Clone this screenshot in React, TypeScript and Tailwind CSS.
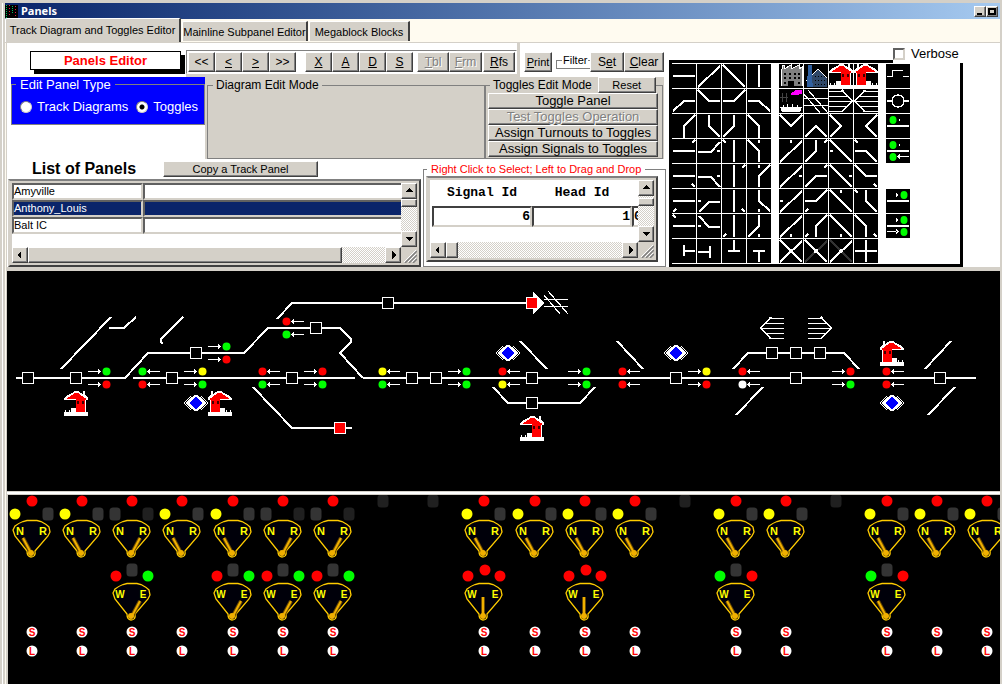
import type { ReactNode } from "react";

const RAISED =
  "bg-[#d4d0c8] border border-t-white border-l-white border-r-[#404040] border-b-[#404040] shadow-[inset_-1px_-1px_0_#808080]";
const TRACK =
  "bg-[repeating-conic-gradient(#ffffff_0_25%,#d4d0c8_0_50%)] bg-[length:2px_2px]";
const SUBFORM =
  "border-2 border-t-[#808080] border-l-[#d4d0c8] border-r-[#404040] border-b-[#404040] bg-[#d4d0c8] p-[2px]";

/* ---------- form controls ---------- */

function Btn({
  children,
  className = "",
  disabled = false,
}: {
  children: ReactNode;
  className?: string;
  disabled?: boolean;
}) {
  const tone = disabled ? "text-[#808080] [text-shadow:1px_1px_0_#fff]" : "text-black";
  return (
    <button
      type="button"
      disabled={disabled}
      className={`${RAISED} ${tone} flex items-center justify-center whitespace-nowrap ${className}`}
    >
      {children}
    </button>
  );
}

const ARROWS = {
  up: "M1 5L4.5 1L8 5Z",
  down: "M1 2L4.5 6L8 2Z",
  left: "M5 0L1 4L5 8Z",
  right: "M3 0L7 4L3 8Z",
};

function ScrollBtn({ dir }: { dir: keyof typeof ARROWS }) {
  return (
    <button
      type="button"
      aria-label={dir}
      className={`${RAISED} flex h-4 w-4 shrink-0 items-center justify-center`}
    >
      <svg width="9" height="8" viewBox="0 0 9 8" shapeRendering="crispEdges">
        <path d={ARROWS[dir]} />
      </svg>
    </button>
  );
}

function Grip() {
  return (
    <div className="flex h-4 w-4 items-end justify-end">
      <svg width="13" height="13" viewBox="0 0 13 13">
        <path d="M1 13L13 1M5 13L13 5M9 13L13 9" stroke="#808080" strokeWidth="1.5" />
        <path d="M0 12L12 0M4 12L12 4M8 12L12 8" stroke="#fff" strokeWidth="1" />
      </svg>
    </div>
  );
}

/* ---------- icons shared by the palette and the diagram ---------- */

function House({ flip = false }: { flip?: boolean }) {
  return (
    <g transform={flip ? "translate(24 0) scale(-1 1)" : undefined}>
      <path d="M0 9V7L4 4L8 2L11 0H14L19 3V0H21V4L24 6V9H22V21H24V25H0V21H1V19H2V21H5V19H6V21H7V17H11V9Z" fill="#fff" />
      <path d="M2 8L11 2H14L21 7H22V9H21V21H12V8Z" fill="#f00" />
      <path d="M0 9H12V17H7V19H2V9Z" fill="#000" />
      <path d="M13 10H15V13H13ZM18 10H20V13H18Z" fill="#400000" />
    </g>
  );
}

function YardRight() {
  return (
    <g fill="none" stroke="#fff">
      <path d="M13 1L23.500 12L13 23" strokeWidth="1.500" />
      <path d="M0 2.500H13M0 7.500H18M0 12.500H23M0 17.500H18M0 22.500H13" />
    </g>
  );
}

function Bridge() {
  return (
    <path
      d="M0 9.500H24M0 16.500H24M4 1L24 24M0 5L16 24"
      fill="none"
      stroke="#fff"
      strokeWidth="1.200"
    />
  );
}

function Factory() {
  return (
    <g>
      <path d="M2 22V7L3 5V1H5V5L12 1V5L20 1V5L23 3V22Z" fill="#808080" />
      <path d="M2 22V7L3 5V1H5V5L12 1V5L20 1V5L23 3V22" fill="none" stroke="#fff" />
      <path d="M5 9H7V11H5ZM10 9H12V11H10ZM15 9H17V11H15ZM19 9H21V11H19ZM5 13H7V15H5ZM10 13H12V15H10ZM15 13H17V15H15ZM19 13H21V15H19ZM5 18H7V20H5ZM9 17H15V22H9ZM19 18H21V20H19Z" fill="#000" />
    </g>
  );
}

function Mill() {
  return (
    <g>
      <path d="M8 12L14 5L23 13V23H8Z" fill="#304868" />
      <path d="M2 17L14 5L23 14" fill="none" stroke="#fff" />
      <path d="M4 1H8V14L9 23H3Z" fill="#3060a0" />
      <path d="M11 12.500H21M11 16.500H22M11 20.500H22" stroke="#000" strokeDasharray="1 2" />
    </g>
  );
}

function Ship() {
  return (
    <g>
      <path d="M11 5L14 3L16 1H23V5H20V6H12Z" fill="#f0f" />
      <path d="M1 8.500H9M3.500 4V13M7.500 4V13" stroke="#444" strokeWidth="1.500" />
      <path d="M1 18H4V16H5V18H8V15H9V18H13V15H14V18H18V16H19V18H23L21 23H3Z" fill="#fff" />
    </g>
  );
}

/* ---------- track palette ---------- */

const H = "M1 12H23";
const V = "M12 1V23";
const SL = "M1 23L23 2";
const BS = "M1 1L23 23";
const T = "M12 1V4";
const B = "M12 20V23";
const L = "M1 12H4";
const R = "M20 12H23";
const TL = "M1 1L4 4";
const TR = "M23 1L20 4";
const BL = "M1 23L4 20";
const BR = "M23 23L20 20";

const TRACKS: string[] = [
  H, SL, BS, V,
  "M1 22L12 12H23", "M1 1L12 12H23", "M1 12H12L23 1", "M1 12H12L23 22",
  "M23 1L12 12V24", "M12 1V12L23 23", "M12 1V12L1 23", "M1 1L12 12V24",
  H + TR, "M1 13H14L23 3" + R, V + TL, "M1 1L12 12V23" + T,
  H + BR, "M1 13H14L23 23" + R, V + TR, "M23 1L12 12V23" + T,
  H + BL, "M2 23L12 13H23" + L, V + BR, "M12 1V12L23 22" + B,
  H + TL, "M2 2L12 13H23" + L, V + BL, "M12 1V12L1 23" + B,
  "M12 6V17M12 12H23", "M1 13H13M13 7V19", "M12 1V12M6 12H18", "M6 12H18M12 12V23",
];

const JUNCTIONS: string[] = [
  "M1 1L12 12L23 1", "M1 23L12 12L23 23", "M1 1L12 12L1 23", "M23 1L12 12L23 23",
  SL + T, "M12 1V12L1 23" + TR, BS + L, "M1 12H12L23 23" + TL,
  SL + R, "M1 23L12 12H23" + TR, BS + R, "M1 1L12 12H23" + BR,
  SL + L, "M1 12H12L23 1" + BL, BS + T, "M12 1V12L23 23" + TL,
  SL + B, "M23 1L12 12V23" + BL, BS + B, "M1 1L12 12V23" + BR,
];

function Tile({ d, children }: { d?: string; children?: ReactNode }) {
  return (
    <svg width="24" height="24" viewBox="0 0 24 24" className="bg-black" shapeRendering="crispEdges">
      {d && <path d={d} fill="none" stroke="#fff" strokeWidth="2" />}
      {children}
    </svg>
  );
}

function Dot({ x, y, c }: { x: number; y: number; c: string }) {
  return <ellipse cx={x} cy={y} rx="3.500" ry="4" fill={c} shapeRendering="auto" />;
}

function Palette() {
  return (
    <div className="flex items-start gap-2 border-[3px] border-black pt-px pb-px">
      <div className="grid grid-cols-4 gap-px">
        {TRACKS.map((d, i) => (
          <Tile key={i} d={d} />
        ))}
      </div>
      <div className="grid grid-cols-4 gap-px">
        <Tile><Factory /></Tile>
        <Tile><Mill /></Tile>
        <Tile><House /></Tile>
        <Tile><House flip /></Tile>
        <Tile><Ship /></Tile>
        <Tile><Bridge /></Tile>
        <Tile><YardRight /></Tile>
        <Tile>
          <g transform="translate(24 0) scale(-1 1)"><YardRight /></g>
        </Tile>
        {JUNCTIONS.map((d, i) => (
          <Tile key={i} d={d} />
        ))}
        <Tile d={SL + BS}><circle cx="12" cy="12" r="2" fill="#fff" /></Tile>
        <Tile>
          <path d={SL} stroke="#333" strokeWidth="2" />
          <path d={BS} stroke="#fff" strokeWidth="2" />
          <circle cx="12" cy="12" r="2" fill="#fff" />
        </Tile>
        <Tile>
          <path d={BS} stroke="#333" strokeWidth="2" />
          <path d={SL} stroke="#fff" strokeWidth="2" />
          <circle cx="12" cy="12" r="2" fill="#fff" />
        </Tile>
        <Tile d={H + V} />
      </div>
      <div className="grid grid-cols-1 gap-px">
        <Tile>
          <path d="M1 12.500H6.500V6.500H17M17 12.500H23" fill="none" stroke="#fff" strokeWidth="1.500" />
        </Tile>
        <Tile>
          <path d="M1 12H6M18 12H23" stroke="#fff" strokeWidth="2" />
          <circle cx="12" cy="12" r="6" fill="none" stroke="#fff" strokeWidth="1.500" />
        </Tile>
        <Tile d={H}>
          <Dot x={7} y={6} c="#0f0" />
          <path d="M14 4V8L12 6Z" fill="#fff" />
        </Tile>
        <Tile d={H}>
          <Dot x={7} y={6} c="#0f0" />
          <Dot x={7} y={18} c="#0f0" />
          <path d="M14 4V8L12 6ZM14 15V20L11 17.500ZM13 17H23V18H13Z" fill="#fff" />
        </Tile>
        <div className="h-6" />
        <Tile d={H}>
          <Dot x={18} y={6} c="#0f0" />
          <path d="M10 4V8L12 6Z" fill="#fff" />
        </Tile>
        <Tile d={H}>
          <Dot x={18} y={6} c="#0f0" />
          <Dot x={18} y={18} c="#0f0" />
          <path d="M10 4V8L12 6ZM10 15V20L13 17.500ZM1 17H11V18H1Z" fill="#fff" />
        </Tile>
      </div>
    </div>
  );
}

/* ---------- track diagram ---------- */

const RAILS = [
  "M16 378H125L148 353H244L268 328H340L351 339V342L340 353L363 378",
  "M133 378H355M363 378H976",
  "M61 369L111 317",
  "M109 328H124L136 317",
  "M183 317L161 339V342L163 344",
  "M277 319L292 303H527",
  "M253 387L292 428H352",
  "M520 341L547 369",
  "M617 341L643 369",
  "M493 387L508 403H580L595 387",
  "M733 369L748 353H844L859 369",
  "M736 415L763 387",
  "M925 369L951 341",
  "M928 415L955 387",
];

const BLOCKS: [number, number][] = [
  [28, 378], [76, 378], [172, 378], [196, 353], [316, 328], [292, 378], [388, 303], [412, 378], [436, 378],
  [532, 378], [532, 403], [676, 378], [796, 378], [772, 353], [796, 353], [820, 353], [940, 378],
];

const RED = "#ff0000";
const GREEN = "#00ff00";
const YELLOW = "#ffff00";

const SIGNALS: [number, number, "l" | "r", string, string][] = [
  [106, 371, "r", GREEN, RED],
  [142, 371, "l", GREEN, RED],
  [202, 371, "r", YELLOW, GREEN],
  [226, 346, "r", GREEN, RED],
  [286, 321, "l", RED, GREEN],
  [262, 371, "l", RED, GREEN],
  [322, 371, "r", RED, GREEN],
  [382, 371, "l", YELLOW, GREEN],
  [466, 371, "r", GREEN, GREEN],
  [502, 371, "l", RED, YELLOW],
  [586, 371, "r", GREEN, GREEN],
  [622, 371, "l", RED, RED],
  [706, 371, "r", YELLOW, RED],
  [742, 371, "l", RED, "#ffffff"],
  [850, 371, "r", RED, GREEN],
  [886, 371, "l", RED, RED],
];

function Signal({ x, y, dir, a, b }: { x: number; y: number; dir: "l" | "r"; a: string; b: string }) {
  const arrow =
    dir === "r" ? "M-18 0.500H-5M-7.500 -2V3M-6.500 -1V2" : "M5 0.500H18M7.500 -2V3M6.500 -1V2";
  return (
    <g transform={`translate(${x} ${y})`}>
      <path d={arrow} stroke="#fff" />
      <circle cx="0.500" cy="0.500" r="4" fill={a} shapeRendering="auto" />
      <g transform="translate(0 13)">
        <path d={arrow} stroke="#fff" />
        <circle cx="0.500" cy="0.500" r="4" fill={b} shapeRendering="auto" />
      </g>
    </g>
  );
}

function Diamond({ x, y }: { x: number; y: number }) {
  return (
    <g transform={`translate(${x} ${y})`}>
      <path d="M-5 -7L-12 0L-5 7M-4 -6L-10 0L-4 6M5 -7L12 0L5 7M4 -6L10 0L4 6" fill="none" stroke="#fff" />
      <path d="M-9 0L-2 -8H2L9 0L2 8H-2Z" fill="#fff" />
      <path d="M-6.500 0L0 -6.500L6.500 0L0 6.500Z" fill="#0000ff" />
    </g>
  );
}

function Diagram() {
  return (
    <svg width="993" height="220" viewBox="7 271 993 220" shapeRendering="crispEdges" className="block max-w-none">
      {RAILS.map((d) => (
        <path key={d} d={d} fill="none" stroke="#fff" strokeWidth="2" />
      ))}
      {BLOCKS.map(([x, y]) => (
        <rect key={`${x}-${y}`} x={x - 5.5} y={y - 5.5} width="11" height="11" fill="#000" stroke="#fff" />
      ))}
      <path d="M533 292L544 303L533 314Z" fill="#fff" />
      <rect x="526.500" y="297.500" width="11" height="11" fill="#f00" stroke="#fff" />
      <rect x="334.500" y="422.500" width="11" height="11" fill="#f00" stroke="#fff" />
      <g transform="translate(544 290)"><Bridge /></g>
      <g transform="translate(808 316)"><YardRight /></g>
      <g transform="translate(784 316) scale(-1 1)"><YardRight /></g>
      {SIGNALS.map(([x, y, dir, a, b]) => (
        <Signal key={`${x}-${y}`} x={x} y={y} dir={dir} a={a} b={b} />
      ))}
      <g transform="translate(64 391)"><House /></g>
      <g transform="translate(208 391)"><House flip /></g>
      <g transform="translate(520 416)"><House /></g>
      <g transform="translate(880 341)"><House flip /></g>
      <Diamond x={196} y={403} />
      <Diamond x={508} y={353} />
      <Diamond x={676} y={353} />
      <Diamond x={892} y={403} />
    </svg>
  );
}

/* ---------- toggles ---------- */

type Lever = "left" | "mid" | "right";
type Toggle = { x: number; turnout?: Lever; signal?: Lever };

const TOGGLES: Toggle[] = [
  { x: 32, turnout: "left" },
  { x: 82, turnout: "left" },
  { x: 132, turnout: "right", signal: "right" },
  { x: 182, turnout: "left" },
  { x: 233, turnout: "left", signal: "right" },
  { x: 283, turnout: "right", signal: "right" },
  { x: 333, turnout: "right", signal: "right" },
  { x: 383 },
  { x: 433 },
  { x: 484, turnout: "left", signal: "mid" },
  { x: 535, turnout: "left" },
  { x: 585, turnout: "left", signal: "mid" },
  { x: 635, turnout: "left" },
  { x: 685 },
  { x: 736, turnout: "left", signal: "left" },
  { x: 786, turnout: "left" },
  { x: 836 },
  { x: 887, turnout: "left", signal: "left" },
  { x: 937, turnout: "left" },
  { x: 987, turnout: "left" },
];

const NEEDLES: Record<Lever, string> = {
  left: "M-9 18L-1 33",
  mid: "M-1 14V33",
  right: "M8 18L0 33",
};

function Lamp({ x, y, c }: { x: number; y: number; c: string }) {
  return <ellipse cx={x} cy={y} rx="5.500" ry="5.500" fill={c} />;
}

function DarkLamp({ x, y, c = "#343434" }: { x: number; y: number; c?: string }) {
  return <rect x={x - 5.5} y={y - 6.5} width="11" height="13" rx="3.500" fill={c} />;
}

function Gauge({ left, right, lever }: { left: string; right: string; lever: Lever }) {
  return (
    <g>
      <path
        d="M-19 10L-17 6Q-13 3 -9 1.500L-5 0.500H5L9 1.500Q14 4 17 7L18 12L16 16L3 31Q4 37 -1 37Q-5 37 -5 31L-17 16Z"
        fill="#00000a"
        stroke="#ffcc00"
        strokeWidth="1.300"
      />
      <text x="-12" y="15" textAnchor="middle">{left}</text>
      <text x="11" y="15" textAnchor="middle">{right}</text>
      <path d={NEEDLES[lever]} stroke="#6b4a00" strokeWidth="4" />
      <path d={NEEDLES[lever]} stroke="#f0b000" strokeWidth="2" />
      <circle cx="-1" cy="33" r="3" fill="#f0b000" />
    </g>
  );
}

function Badge({ y, label }: { y: number; label: string }) {
  return (
    <g>
      <circle cx="0" cy={y} r="5.500" fill="#fff" />
      <text x="0" y={y + 4} textAnchor="middle" fill="#f00" className="text-[10px]">
        {label}
      </text>
    </g>
  );
}

function Toggles() {
  return (
    <svg
      width="992"
      height="189"
      viewBox="8 495 992 189"
      className="block max-w-none font-['Liberation_Sans',sans-serif] text-[11px] font-bold"
    >
      {TOGGLES.map(({ x, turnout, signal }) => (
        <g key={x} transform={`translate(${x} 0)`} fill="#ffff00">
          {turnout ? (
            <>
              <Lamp x={0} y={501} c={RED} />
              {turnout === "left" ? <Lamp x={-17} y={514} c={YELLOW} /> : <DarkLamp x={-17} y={514} />}
              <DarkLamp x={16} y={514} c={turnout === "left" ? "#343434" : "#202020"} />
              <g transform="translate(0 520)">
                <Gauge left="N" right="R" lever={turnout} />
              </g>
              <Badge y={632} label="S" />
              <Badge y={651} label="L" />
            </>
          ) : (
            <DarkLamp x={0} y={501} c="#202020" />
          )}
          {signal && (
            <>
              <Lamp x={-16} y={576} c={signal === "left" ? GREEN : RED} />
              {signal === "mid" ? <Lamp x={1} y={570} c={RED} /> : <DarkLamp x={0} y={570} />}
              <Lamp x={16} y={576} c={signal === "right" ? GREEN : RED} />
              <g transform="translate(0 583)" className="text-[10px]">
                <Gauge left="W" right="E" lever={signal} />
              </g>
            </>
          )}
        </g>
      ))}
    </svg>
  );
}

/* ---------- sections ---------- */

function TitleBar() {
  return (
    <header className="flex h-4 items-center justify-between bg-gradient-to-r from-[#0a246a] to-[#a6caf0] pr-[2px]">
      <div className="flex items-center gap-[3px]">
        <svg width="13" height="13" viewBox="0 0 13 13" shapeRendering="crispEdges" className="bg-black">
          <path d="M1.500 0V13M7.500 1V9" stroke="#00c060" strokeDasharray="1 1" />
          <path d="M4.500 0V12M10.500 1V13" stroke="#e02040" strokeDasharray="1 2" />
        </svg>
        <h1 className="font-['Noto_Sans',sans-serif] text-[11px] leading-4 font-bold text-white">Panels</h1>
      </div>
      <div className="flex">
        <Btn className="h-[11px] w-3">
          <svg width="8" height="7" viewBox="0 0 8 7" aria-label="Minimize"><path d="M1 5H6V7H1Z" /></svg>
        </Btn>
        <Btn className="h-[11px] w-3">
          <svg width="8" height="7" viewBox="0 0 8 7" aria-label="Maximize" shapeRendering="crispEdges">
            <path d="M1 1H7V6H1Z" fill="none" stroke="#000" strokeWidth="1.500" />
          </svg>
        </Btn>
      </div>
    </header>
  );
}

function Tabs() {
  const tab =
    "rounded-tl-[2px] border border-b-0 border-t-white border-l-white border-r-2 border-r-[#404040] bg-[#d4d0c8] whitespace-nowrap";
  return (
    <nav role="tablist" className="flex h-6 items-end gap-px border-b border-[#d4d0c8] bg-[#fffbf0]">
      <button type="button" role="tab" aria-selected="true" className={`${tab} -mt-px h-6 w-[176px] pb-px`}>
        Track Diagram and Toggles Editor
      </button>
      <button type="button" role="tab" aria-selected="false" className={`${tab} mb-px h-5 w-[126px]`}>
        Mainline Subpanel Editor
      </button>
      <button type="button" role="tab" aria-selected="false" className={`${tab} mb-px h-5 w-[101px]`}>
        Megablock Blocks
      </button>
    </nav>
  );
}

function Toolbar() {
  const b = "h-5 w-[27px] text-[12px]";
  return (
    <div className="flex w-[334px] shrink-0 flex-col border-r-[3px] border-[#d4d0c8] bg-[#d4d0c8]">
      <div className="h-[7px] bg-white" />
      <div className="flex h-6 items-center border border-t-[#808080] border-l-[#808080] border-r-white border-b-white bg-white pl-px">
        <Btn className={b}>&lt;&lt;</Btn>
        <Btn className={b}><u>&lt;</u></Btn>
        <Btn className={b}><u>&gt;</u></Btn>
        <Btn className={b}>&gt;&gt;</Btn>
        <div className="w-[9px]" />
        <Btn className={b}><u>X</u></Btn>
        <Btn className={b}><u>A</u></Btn>
        <Btn className={b}><u>D</u></Btn>
        <Btn className={b}><u>S</u></Btn>
        <div className="w-1" />
        <Btn className="h-5 w-8 text-[12px]" disabled><span><u>T</u>bl</span></Btn>
        <Btn className="h-5 w-[33px] text-[12px]" disabled><span><u>F</u>rm</span></Btn>
        <Btn className="ml-px h-5 w-8 text-[12px]"><span><u>R</u>fs</span></Btn>
      </div>
    </div>
  );
}

function FilterBar() {
  return (
    <div className="flex items-start bg-white pt-[9px] pl-1">
      <Btn className="h-5 w-7 text-[11px]"><span><u>P</u>rint</span></Btn>
      <fieldset className="ml-1 h-[17px] w-[34px] border border-r-0 border-[#808080]">
        <legend className="ml-[5px] px-px text-[11px] leading-4">Filter</legend>
      </fieldset>
      <Btn className="h-5 w-[34px] text-[12px]"><span>S<u>e</u>t</span></Btn>
      <Btn className="h-5 w-10 text-[12px]"><span><u>C</u>lear</span></Btn>
    </div>
  );
}

function PanelType() {
  const radio =
    "h-3 w-3 appearance-none rounded-full border border-t-[#808080] border-l-[#808080] border-r-[#d4d0c8] border-b-[#d4d0c8] bg-white checked:bg-[radial-gradient(#000_0_2px,#fff_3px)]";
  return (
    <fieldset className="h-12 w-[194px] border border-[#808080] bg-[#0000ff] text-[13px] leading-[15px] text-white shadow-[0_-7px_0_#0000ff]">
      <legend className="ml-1 bg-[#0000ff] px-1">Edit Panel Type</legend>
      <div className="flex items-center gap-2 pt-[7px] pl-2">
        <label className="flex items-center gap-[5px]">
          <input type="radio" name="panelType" className={radio} />
          Track Diagrams
        </label>
        <label className="flex items-center gap-[5px]">
          <input type="radio" name="panelType" defaultChecked className={radio} />
          Toggles
        </label>
      </div>
    </fieldset>
  );
}

function EditModes() {
  const wide = "h-4 w-[170px] text-[13px]";
  return (
    <div className="flex h-[82px] w-[459px] bg-[#d4d0c8] pl-[2px]">
      <fieldset className="w-[278px] border border-[#808080]">
        <legend className="ml-[5px] px-[3px] text-[12px] leading-4">Diagram Edit Mode</legend>
      </fieldset>
      <fieldset className="w-[178px] border border-[#808080]">
        <legend className="ml-1 flex items-center gap-[6px] pl-[3px] text-[12px] leading-4">
          Toggles Edit Mode
          <Btn className="h-4 w-[58px] text-[11px]">Reset</Btn>
        </legend>
        <div className="flex flex-col pl-[2px]">
          <Btn className={wide}>Toggle Panel</Btn>
          <Btn className={wide} disabled>Test Toggles Operation</Btn>
          <Btn className={wide}>Assign Turnouts to Toggles</Btn>
          <Btn className={wide}>Assign Signals to Toggles</Btn>
        </div>
      </fieldset>
    </div>
  );
}

function PanelList() {
  const rows = ["Amyville", "Anthony_Louis", "Balt IC"];
  return (
    <section className="w-[413px] shrink-0">
      <div className="flex h-5 items-center pl-6">
        <h2 className="w-[131px] text-[16px] leading-5 font-bold">List of Panels</h2>
        <Btn className="h-4 w-[155px]">Copy a Track Panel</Btn>
      </div>
      <div className={`${SUBFORM} h-[88px]`}>
        <div className="flex">
          <div className="h-16 flex-1 bg-white">
            <table className="w-full border-separate border-spacing-0">
              <tbody>
                {rows.map((name, i) => (
                  <tr key={name} className={i === 1 ? "bg-[#0a246a] text-white" : ""}>
                    <td className="h-[17px] w-[131px] border-2 border-t-[#606060] border-l-[#606060] border-r-[#d4d0c8] border-b-[#d4d0c8] p-0 leading-[13px]">
                      {name}
                    </td>
                    <td className="h-[17px] border-2 border-r-0 border-t-[#606060] border-l-[#606060] border-b-[#d4d0c8] p-0" />
                  </tr>
                ))}
              </tbody>
            </table>
          </div>
          <div className={`${TRACK} flex h-16 w-4 flex-col`}>
            <ScrollBtn dir="up" />
            <div className={`${RAISED} h-2`} />
            <div className="flex-1" />
            <ScrollBtn dir="down" />
          </div>
        </div>
        <div className="flex">
          <div className={`${TRACK} flex h-4 flex-1`}>
            <ScrollBtn dir="left" />
            <div className={`${RAISED} w-[314px]`} />
            <div className="flex-1" />
            <ScrollBtn dir="right" />
          </div>
          <Grip />
        </div>
      </div>
    </section>
  );
}

function SignalList() {
  const cell =
    "h-[21px] border-2 border-t-[#404040] border-l-[#404040] border-r-[#d4d0c8] border-b-[#d4d0c8] p-0 text-right";
  return (
    <fieldset className="mt-[3px] h-[105px] w-[243px] border border-[#808080] bg-white">
      <legend className="ml-[3px] px-1 leading-[14px] text-[#ff0000]">
        Right Click to Select; Left to Drag and Drop
      </legend>
      <div className={`${SUBFORM} ml-[2px] h-[86px] w-[232px]`}>
        <div className="flex">
          <div className="h-[62px] w-[208px] shrink-0 overflow-hidden bg-white pl-[2px]">
            <table className="w-[230px] table-fixed border-separate border-spacing-0 font-['Liberation_Mono',monospace] text-[13px] leading-[14px] font-bold">
              <thead>
                <tr>
                  <th className="h-[26px] w-[100px] p-0">Signal Id</th>
                  <th className="w-[100px] p-0">Head Id</th>
                  <th className="w-[30px] p-0" />
                </tr>
              </thead>
              <tbody>
                <tr>
                  <td className={cell}>6</td>
                  <td className={cell}>1</td>
                  <td className={`${cell} !text-left`}>0</td>
                </tr>
              </tbody>
            </table>
          </div>
          <div className={`${TRACK} flex h-[62px] w-4 flex-col`}>
            <ScrollBtn dir="up" />
            <div className="h-[2px]" />
            <div className={`${RAISED} h-2`} />
            <div className="flex-1" />
            <ScrollBtn dir="down" />
          </div>
        </div>
        <div className="flex">
          <div className={`${TRACK} flex h-4 w-[208px]`}>
            <ScrollBtn dir="left" />
            <div className={`${RAISED} w-3`} />
            <div className="flex-1" />
            <ScrollBtn dir="right" />
          </div>
          <Grip />
        </div>
      </div>
    </fieldset>
  );
}

export default function App() {
  return (
    <div className="flex min-h-screen flex-col border-t-[3px] border-r-2 border-[#d4d0c8] bg-[#d4d0c8] font-['Liberation_Sans',Arial,sans-serif] text-[11px] leading-[14px] text-black">
      <div className="flex flex-1 flex-col border-l-2 border-[#d4d0c8]">
        <div className="flex flex-1 flex-col border-l border-white pl-[2px]">
          <TitleBar />
          <Tabs />
          <main className="flex flex-1 flex-col border-l border-[#fffbf0] bg-[#d4d0c8] pl-px">
            <section className="flex items-start bg-white">
              <div className="w-[662px] shrink-0">
                <div className="flex h-[34px]">
                  <div className="w-[179px] shrink-0 pt-2 pl-[23px]">
                    <div className="h-[19px] w-[151px] border border-black bg-white text-center text-[13px] leading-[17px] font-bold text-[#ff0000] shadow-[4px_4px_0_#000]">
                      Panels Editor
                    </div>
                  </div>
                  <Toolbar />
                  <FilterBar />
                </div>
                <div className="flex pl-1">
                  <PanelType />
                  <EditModes />
                </div>
                <div className="flex items-start gap-[2px] pl-px">
                  <PanelList />
                  <SignalList />
                </div>
              </div>
              <div className="relative w-[294px] shrink-0 pt-[17px]">
                <Palette />
                <label className="absolute top-[2px] left-[224px] flex h-[18px] w-[70px] items-center gap-[6px] bg-white text-[13px]">
                  <input
                    type="checkbox"
                    className="h-3 w-3 shrink-0 appearance-none border-2 border-t-[#606060] border-l-[#606060] border-r-[#d4d0c8] border-b-[#d4d0c8] bg-white"
                  />
                  Verbose
                </label>
              </div>
            </section>
            <section className="mt-1 overflow-hidden bg-black">
              <Diagram />
            </section>
            <div className="my-px h-[2px] bg-white" />
            <section className="ml-px flex-1 overflow-hidden bg-black">
              <Toggles />
            </section>
          </main>
        </div>
      </div>
    </div>
  );
}
